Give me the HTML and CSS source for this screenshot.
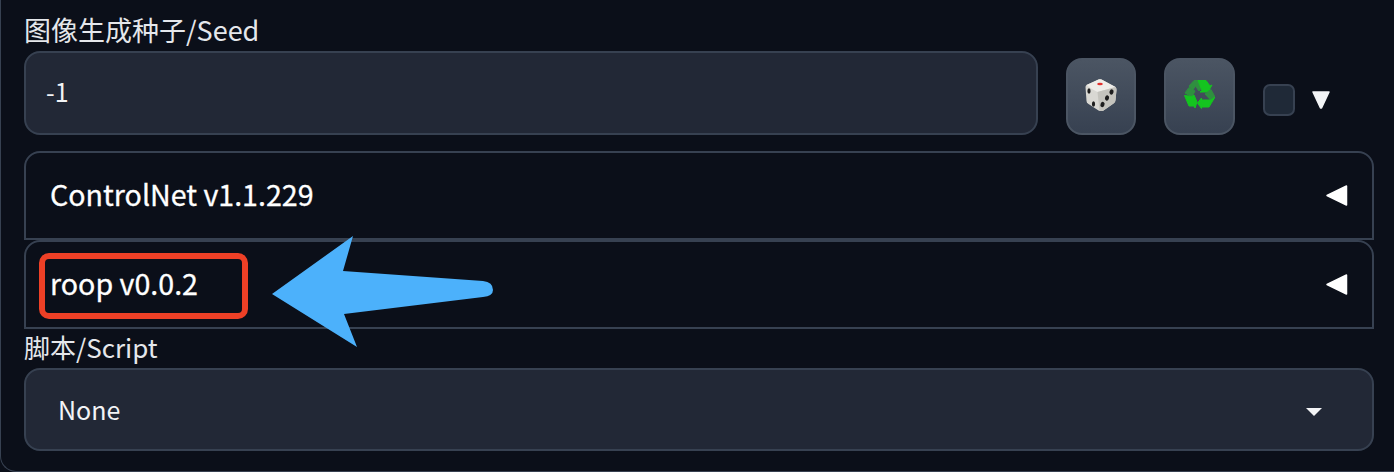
FILE: index.html

```html
<!DOCTYPE html>
<html lang="zh">
<head>
    <meta charset="UTF-8">
    <title>Seed / ControlNet / roop</title>
    <link rel="stylesheet" href="styles.css">
</head>
<body>
<div class="panel">
    <div class="label seed-label">图像生成种子/Seed</div>
    <div class="seed-row">
        <div class="field seed-input">-1</div>
        <div class="tool-btn btn-dice">
            <svg width="33" height="32" viewBox="1 0 32 32">
                <path d="M2 6 L14 .6 Q15.500 0 17 .6 L31 8 Q32 9 32 11 L31 21 Q31 23 29 24.500 L19 31.500 Q17 32.500 14 31.500 L4 25 Q2 24 2 22 L1 8 Q1 7 2 6Z" fill="#d9d8d3"/>
                <path d="M2 6 L14 .6 Q15.500 0 17 .6 L31 8 Q24 10 13 13 Q8 11 2 6Z" fill="#eeede9"/>
                <path d="M13 13 L31 8 Q32 9 32 11 L31 21 Q31 23 29 24.500 L19 31.500 Q17 32.500 15 32 Q14 22 13 13Z" fill="#c4c3bd"/>
                <ellipse cx="15.500" cy="5" rx="2.800" ry="1.300" fill="#e2322e"/>
                <ellipse cx="4.500" cy="12" rx="1.600" ry="2.700" fill="#1d1d1d"/>
                <ellipse cx="9" cy="25" rx="1.600" ry="2.700" fill="#1d1d1d"/>
                <ellipse cx="27" cy="13" rx="2" ry="2.700" transform="rotate(20 27 13)" fill="#1d1d1d"/>
                <ellipse cx="22.500" cy="19" rx="2" ry="2.700" transform="rotate(20 22.500 19)" fill="#1d1d1d"/>
                <ellipse cx="18" cy="25.500" rx="2" ry="2.700" transform="rotate(20 18 25.500)" fill="#1d1d1d"/>
            </svg>
        </div>
        <div class="tool-btn btn-recycle">
            <svg class="recycle" width="31" height="29" viewBox="0 0 31 29">
                <path class="rc-dark" d="M5 6 L10 .5 H17 L20 5 L15 11 L11.500 6 L8.500 10.500 Z"/>
                <path class="rc-light" d="M14 .5 H22 L26 6 L28 5 L24 12 L16 12 L18 10.500 Z"/>
                <path class="rc-dark" d="M1 13 L5 7.500 L11 11 L8 17 Z"/>
                <path class="rc-light" d="M.5 15.500 L8 16.500 L10 15 L13 22 L11 28 L10 26 H5 Z"/>
                <path class="rc-dark" d="M21 14 L27 9.500 L31 17 L27 20.500 Z"/>
                <path class="rc-light" d="M31 17 L25 27 H17.500 V28.500 L13.500 23 L17.500 18 V20 H27 Z"/>
            </svg>
        </div>
        <div class="check-box"></div>
        <svg class="down-tri" width="18" height="18" viewBox="0 0 18 18">
            <path d="M1 1 H17 L9.500 17 H8.500 Z" fill="#f3f4f6" stroke="#f3f4f6" stroke-width="1.500" stroke-linejoin="round"/>
        </svg>
    </div>

    <div class="accordion first">
        <span class="acc-title">ControlNet v1.1.229</span>
        <svg class="left-tri" width="22" height="21" viewBox="0 0 22 21">
            <path d="M20.500 1 V20 L1 10.500 Z" fill="#fff" stroke="#fff" stroke-width="1.500" stroke-linejoin="round"/>
        </svg>
    </div>
    <div class="accordion second">
        <span class="acc-title">roop v0.0.2</span>
        <svg class="left-tri" width="22" height="21" viewBox="0 0 22 21">
            <path d="M20.500 1 V20 L1 10.500 Z" fill="#fff" stroke="#fff" stroke-width="1.500" stroke-linejoin="round"/>
        </svg>
    </div>

    <div class="label script-label">脚本/Script</div>
    <div class="field script-select">
        <span class="select-value">None</span>
        <svg class="caret" width="16" height="8" viewBox="0 0 16 8"><path d="M0 0 H16 L8 8 Z" fill="#f3f4f6"/></svg>
    </div>

    <!-- annotations drawn on top of the screenshot -->
    <div class="red-box"></div>
    <svg class="blue-arrow" width="225" height="115" viewBox="0 0 225 115">
        <path d="M0 58 L81 0 L71 35 L211 45 Q221 46 221 54 Q221 60 211 61 L72 78 L85 111 Z" fill="#4cb1fb"/>
    </svg>
</div>
</body>
</html>
```

FILE: styles.css

```css
body {
    margin: 0;
    background-color: #0b0f19;
    font-family: "Noto Sans CJK SC", "Noto Sans", sans-serif;
    color: #f3f4f6;
    overflow: hidden;
}
.panel {
    position: relative;
    box-sizing: border-box;
    height: 472px;
    padding: 15px 20px 0 24px;
    border-left: 1px solid #374151;
    border-bottom: 1px solid #374151;
    border-bottom-left-radius: 16px;
}
.label {
    color: #e5e7eb;
    margin-left: -1px;
    height: 36px;
    line-height: 30px;
}
.seed-label {
    font-size: 27px;
}
.script-label {
    font-size: 26px;
    margin-top: 3px;
}
.seed-row {
    display: flex;
    align-items: center;
    height: 84px;
}
.field {
    box-sizing: border-box;
    background-color: #222836;
    border: 2px solid #374151;
    border-radius: 16px;
    font-size: 25px;
    display: flex;
    align-items: center;
}
.seed-input {
    width: 1014px;
    height: 84px;
    padding: 0 0 4px 20px;
    margin-left: -1px;
    flex: none;
}
.tool-btn {
    box-sizing: border-box;
    width: 70px;
    height: 77px;
    margin-top: 7px;
    margin-left: 28px;
    padding-bottom: 4px;
    border: 2px solid #4b5563;
    border-radius: 16px;
    background: linear-gradient(to bottom, #4b5563, #374151);
    display: flex;
    align-items: center;
    justify-content: center;
}
.btn-recycle {
    width: 71px;
}
.rc-dark {
    fill: #2f8f3f;
    stroke: #2f8f3f;
    stroke-width: 1;
    stroke-linejoin: round;
}
.rc-light {
    fill: #14c41f;
    stroke: #14c41f;
    stroke-width: 1;
    stroke-linejoin: round;
}
.check-box {
    box-sizing: border-box;
    width: 32px;
    height: 32px;
    margin-left: 28px;
    margin-top: 14px;
    border: 2px solid #374151;
    border-radius: 7px;
    background-color: #1f2937;
}
.down-tri {
    margin-left: 17px;
    margin-top: 14px;
}
.accordion {
    box-sizing: border-box;
    height: 89px;
    margin-left: -1px;
    border: 2px solid #374151;
    border-radius: 16px 16px 0 0;
    display: flex;
    align-items: center;
    justify-content: space-between;
    padding: 0 24px 0 24px;
}
.accordion.first {
    margin-top: 16px;
}
.acc-title {
    font-size: 28.6px;
    line-height: 36px;
    margin-bottom: 4px;
    color: #fff;
    -webkit-text-stroke: 0.3px #fff;
}
.script-select {
    height: 83px;
    margin-left: -1px;
    justify-content: space-between;
    padding: 0 50px 0 32px;
}
.select-value {
    margin-bottom: 2px;
}
.caret {
    margin-top: 4px;
}
.red-box {
    position: absolute;
    left: 38px;
    top: 253px;
    width: 197px;
    height: 54px;
    border: 6px solid #ee4026;
    border-radius: 10px;
}
.blue-arrow {
    position: absolute;
    left: 271px;
    top: 236px;
}
```
